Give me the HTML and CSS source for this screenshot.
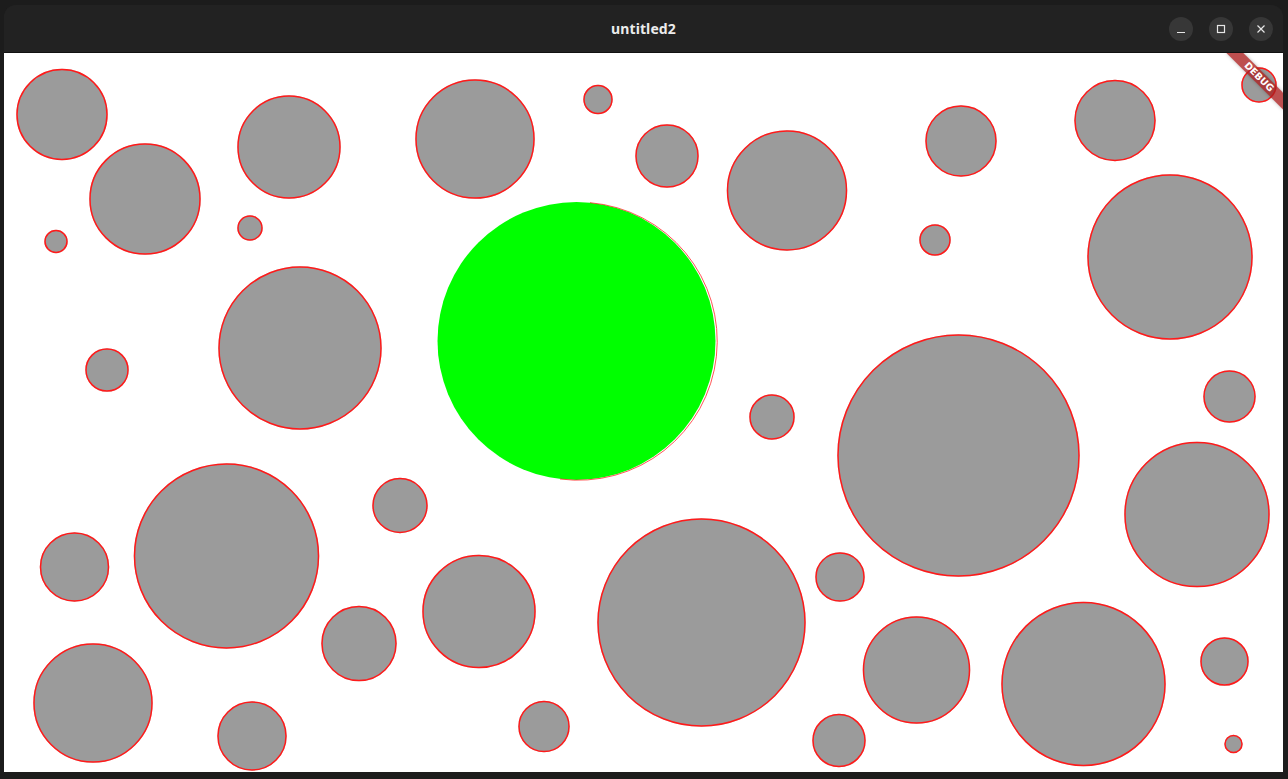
FILE: index.html
```html
<!DOCTYPE html>
<html>
<head>
<meta charset="utf-8">
<title>untitled2</title>
<link rel="stylesheet" href="styles.css">
</head>
<body>
<div class="desktop">
  <div class="window">
    <div class="titlebar">
      <div class="title">untitled2</div>
      <div class="controls">
        <div class="btn">
          <svg width="24" height="24" viewBox="0 0 24 24"><line x1="8" y1="15.5" x2="16" y2="15.5" stroke="#e6e6e6" stroke-width="1.2"/></svg>
        </div>
        <div class="btn">
          <svg width="24" height="24" viewBox="0 0 24 24"><rect x="8.5" y="8.5" width="7" height="7" fill="none" stroke="#e6e6e6" stroke-width="1.2"/></svg>
        </div>
        <div class="btn">
          <svg width="24" height="24" viewBox="0 0 24 24"><path d="M8.5 8.5 L15.5 15.5 M15.5 8.5 L8.5 15.5" stroke="#e6e6e6" stroke-width="1.2"/></svg>
        </div>
      </div>
    </div>
    <div class="content">
      <svg class="canvas" width="1279" height="719" viewBox="4 53 1279 719">
        <g class="dots">
          <circle cx="62" cy="114.5" r="45"/>
          <circle cx="145" cy="199" r="55"/>
          <circle cx="56" cy="241.5" r="11"/>
          <circle cx="289" cy="147" r="51"/>
          <circle cx="250" cy="228" r="12"/>
          <circle cx="475" cy="139" r="59"/>
          <circle cx="598" cy="99.5" r="14"/>
          <circle cx="667" cy="156" r="31"/>
          <circle cx="787" cy="190.5" r="59.5"/>
          <circle cx="961" cy="141" r="35"/>
          <circle cx="935" cy="240" r="15"/>
          <circle cx="1115" cy="120.5" r="40"/>
          <circle cx="1259" cy="85" r="17"/>
          <circle cx="1170" cy="257" r="82"/>
          <circle cx="300" cy="348" r="81"/>
          <circle cx="107" cy="370" r="21"/>
          <circle cx="772" cy="417" r="22"/>
          <circle cx="958.5" cy="455.5" r="120.5"/>
          <circle cx="1229.5" cy="396.5" r="25.5"/>
          <circle cx="1197" cy="514.5" r="72"/>
          <circle cx="226.5" cy="556" r="92"/>
          <circle cx="400" cy="505.5" r="27"/>
          <circle cx="74.5" cy="567" r="34"/>
          <circle cx="359" cy="643.5" r="37"/>
          <circle cx="479" cy="611.5" r="56"/>
          <circle cx="701.5" cy="622.5" r="103.5"/>
          <circle cx="840" cy="577" r="24"/>
          <circle cx="916.5" cy="670" r="53"/>
          <circle cx="1083.5" cy="684" r="81.5"/>
          <circle cx="1224.5" cy="661.5" r="23.5"/>
          <circle cx="1233.5" cy="744" r="8.5"/>
          <circle cx="93" cy="703" r="59"/>
          <circle cx="252" cy="736" r="34"/>
          <circle cx="544" cy="726.5" r="25"/>
          <circle cx="839" cy="740.5" r="26"/>
        </g>
        <circle class="selected" cx="576.5" cy="341" r="139"/>
        <path class="selected-edge" d="M 590 202.7 A 139 139 0 1 1 560 479"/>
      </svg>
      <div class="banner-anchor">
        <div class="banner">DEBUG</div>
      </div>
    </div>
  </div>
</div>
</body>
</html>
```
FILE: styles.css
```css
html, body {
  margin: 0;
  padding: 0;
  background: #1c1c1c;
  width: 1288px;
  height: 779px;
  overflow: hidden;
}

.desktop {
  padding: 5px 0 0 4px;
}

.window {
  width: 1279px;
  border-radius: 12px 12px 0 0;
  overflow: hidden;
  background: #222222;
}

.titlebar {
  height: 48px;
  background: #222222;
  display: flex;
  align-items: center;
  justify-content: center;
  position: relative;
  border-bottom: 1px solid #111;
  box-sizing: border-box;
}

.title {
  font-family: "Noto Sans", "DejaVu Sans", sans-serif;
  font-weight: 700;
  font-size: 14px;
  color: #ececec;
  letter-spacing: 0.1px;
}

.controls {
  position: absolute;
  right: 10px;
  top: 12px;
  display: flex;
  gap: 16px;
}

.btn {
  width: 24px;
  height: 24px;
  border-radius: 50%;
  background: #373737;
}

.btn svg {
  display: block;
}

.content {
  position: relative;
  height: 719px;
  background: #ffffff;
  overflow: hidden;
}

.canvas {
  display: block;
}

.dots circle {
  fill: #9b9b9b;
  stroke: #ff1a1a;
  stroke-width: 1.5;
  filter: drop-shadow(0.6px 0.6px 0.4px rgba(0, 0, 0, 0.2));
}

.selected {
  fill: #00ff00;
}

.selected-edge {
  fill: none;
  stroke: #ff2a2a;
  stroke-width: 0.8;
}

.banner-anchor {
  position: absolute;
  top: 0;
  right: 0;
  width: 0;
  height: 0;
}

.banner {
  position: absolute;
  left: -40px;
  top: 28px;
  width: 80px;
  height: 12px;
  transform-origin: 40px -28px;
  transform: rotate(45deg);
  background: rgba(170, 30, 30, 0.78);
  box-shadow: 0 0 4px rgba(0, 0, 0, 0.25);
  color: #ffffff;
  font-family: "DejaVu Sans", "Liberation Sans", sans-serif;
  font-weight: 700;
  font-size: 9.5px;
  line-height: 12px;
  text-align: center;
}
```
